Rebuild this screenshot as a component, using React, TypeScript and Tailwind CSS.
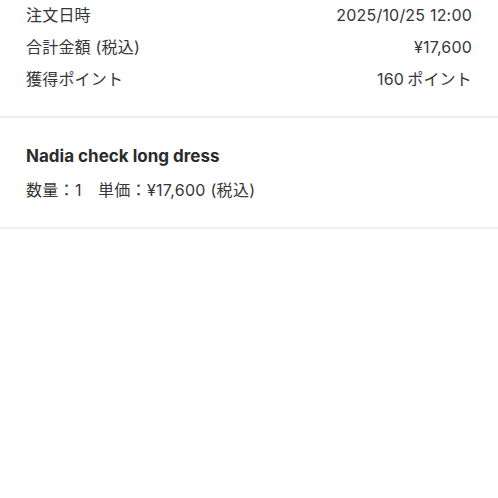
const rows = [
  { label: '注文日時', value: '2025/10/25 12:00' },
  { label: '合計金額 (税込)', value: '¥17,600' },
  { label: '獲得ポイント', value: '160\u2009ポイント' },
];

export default function App() {
  return (
    <div
      className="w-full min-h-[498px] bg-white text-[#363636]"
      style={{ fontFamily: 'Inter, "Noto Sans CJK JP", sans-serif' }}
    >
      {/* Order summary */}
      <div className="px-[26px] -mt-px pb-[21px]">
        {rows.map((row) => (
          <div key={row.label} className="flex h-8 items-center justify-between text-[16px] tracking-[0.2px]">
            <span>{row.label}</span>
            <span>{row.value}</span>
          </div>
        ))}
      </div>
      <div className="h-[2px] bg-[#efefef]" />

      {/* Item */}
      <div className="px-[26px] pt-[26px] pb-[25px]">
        <p className="text-[17px] font-bold leading-[24px] text-[#2b2b2b]">Nadia check long dress</p>
        <p className="mt-[10px] text-[16px] leading-[24px] tracking-[0.3px]">
          数量：1　単価：¥17,600 (税込)
        </p>
      </div>
      <div className="h-[2px] bg-[#efefef]" />
    </div>
  );
}
